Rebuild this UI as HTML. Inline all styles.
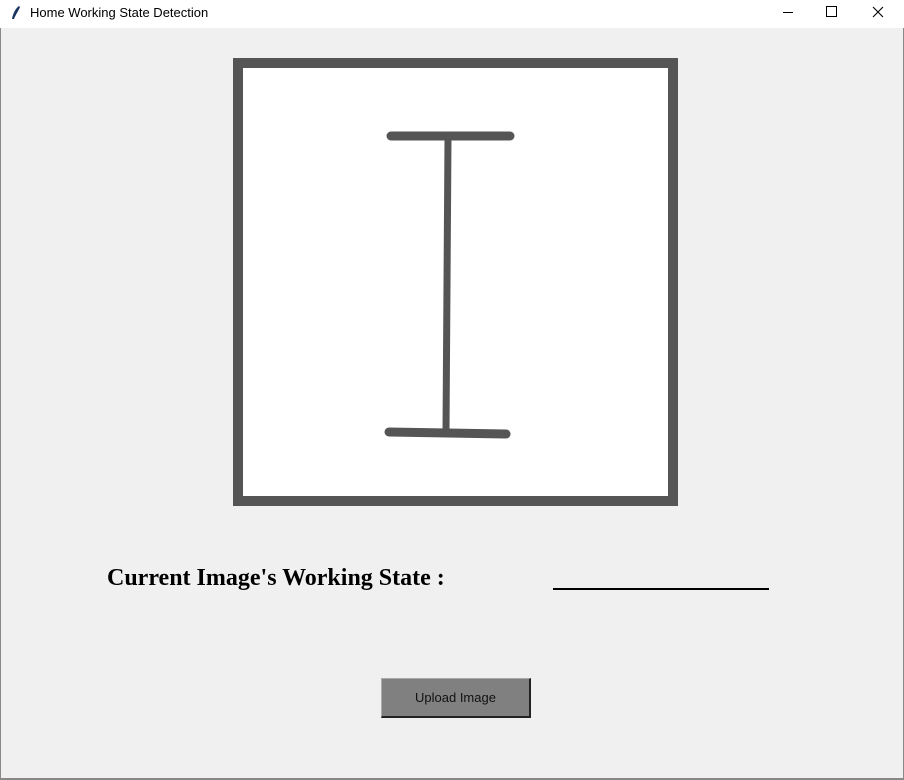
<!DOCTYPE html>
<html><head><style>
body{margin:0;width:904px;height:780px;background:#f0f0f0;position:relative;overflow:hidden;font-family:"Liberation Sans",sans-serif}
.t{position:absolute;left:0;top:0;width:904px;height:28px;background:#fff}
.b{position:absolute}
</style></head><body>
<div class="t">
<svg class="b" style="left:10px;top:5px" width="12" height="16" viewBox="0 0 12 16"><path d="M9 1 C6 3 3 8 2 14 L4 14 C6 9 9 5 10 2 Z" fill="#1a3560"/></svg>
<div class="b" style="left:30px;top:5px;font-size:13px;color:#000">Home Working State Detection</div>
<div class="b" style="left:783px;top:12px;width:10px;height:1px;background:#000"></div>
<div class="b" style="left:826px;top:6px;width:9px;height:9px;border:1px solid #000"></div>
<svg class="b" style="left:872px;top:6px" width="12" height="12"><path d="M1 1L11 11M11 1L1 11" stroke="#000" stroke-width="1.1"/></svg>
</div>
<div class="b" style="left:0;top:28px;width:1px;height:752px;background:#888"></div>
<div class="b" style="right:0;top:28px;width:1px;height:752px;background:#888"></div>
<div class="b" style="left:0;top:778px;width:904px;height:2px;background:#888"></div>
<div class="b" style="left:233px;top:58px;width:425px;height:428px;border:10px solid #555;background:#fff"></div>
<svg class="b" style="left:0;top:0" width="904" height="780">
<g stroke="#555" stroke-linecap="round" fill="none">
<line x1="391" y1="136" x2="510" y2="136" stroke-width="9"/>
<line x1="448" y1="138" x2="446" y2="430" stroke-width="7"/>
<line x1="389" y1="432" x2="506" y2="434" stroke-width="9"/>
</g></svg>
<div class="b" style="left:107px;top:565px;font-family:'Liberation Serif',serif;font-weight:bold;font-size:24px;color:#000;white-space:nowrap">Current Image's Working State :</div>
<div class="b" style="left:553px;top:588px;width:216px;height:2px;background:#000"></div>
<div class="b" style="left:381px;top:678px;border-right:2px solid #222;border-bottom:2px solid #222;border-top:1px solid #aaa;border-left:1px solid #aaa;box-sizing:border-box;width:150px;height:40px;background:#808080;font-size:13px;color:#111;text-align:center;line-height:38px">Upload Image</div>
</body></html>
